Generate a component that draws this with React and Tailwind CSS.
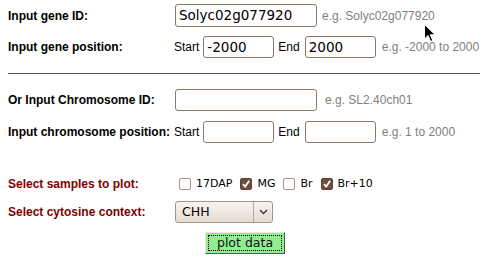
import React from "react";

const Box = ({ w, h = "h-[22px]", value }) => (
  <div
    className={`${w} ${h} border border-[#86796c] rounded-[3px] bg-white flex items-center px-[3px] font-['DejaVu_Sans',sans-serif] text-[13.5px] text-black`}
  >
    {value}
  </div>
);

const Hint = ({ children, className = "" }) => (
  <span className={`text-[12px] text-[#808080] ${className}`}>{children}</span>
);

const Check = ({ checked, label }) => (
  <label className="flex items-center">
    <span
      className={`ml-[4px] w-[12px] h-[12px] rounded-[2px] border flex items-center justify-center ${
        checked ? "bg-[#6e4d3b] border-[#5e4031]" : "bg-white border-[#a3968a]"
      }`}
    >
      {checked && (
        <svg width="10" height="10" viewBox="0 0 10 10">
          <path d="M2 5.2 L4.2 7.6 L8.2 1.8" stroke="#fff" strokeWidth="1.8" fill="none" />
        </svg>
      )}
    </span>
    <span className="ml-[5px] mr-[4px] font-['DejaVu_Sans',sans-serif] text-[11px] text-black">
      {label}
    </span>
  </label>
);

export default function App() {
  return (
    <div className="relative w-[486px] h-[268px] bg-white font-['Liberation_Sans',Arial,sans-serif] text-[12px] text-black overflow-hidden">
      <div className="pt-[4px] pl-[8px] pr-[6px]">
        {/* gene id */}
        <div className="flex items-center h-[23px]">
          <div className="w-[167px] font-bold">Input gene ID:</div>
          <Box w="w-[142px]" h="h-[23px]" value="Solyc02g077920" />
          <Hint className="ml-[5px]">e.g. Solyc02g077920</Hint>
        </div>

        {/* gene position */}
        <div className="flex items-center h-[22px] mt-[9px]">
          <div className="w-[166px] font-bold">Input gene position:</div>
          <span className="mr-[4px]">Start</span>
          <Box w="w-[71px]" value="-2000" />
          <span className="ml-[4px] mr-[5px]">End</span>
          <Box w="w-[71px]" value="2000" />
          <Hint className="ml-[6px]">e.g. -2000 to 2000</Hint>
        </div>

        <div className="mt-[15px] border-t border-[#555] w-[472px]" />

        {/* chromosome id */}
        <div className="flex items-center h-[22px] mt-[15px]">
          <div className="w-[167px] font-bold">Or Input Chromosome ID:</div>
          <Box w="w-[142px]" />
          <Hint className="ml-[8px]">e.g. SL2.40ch01</Hint>
        </div>

        {/* chromosome position */}
        <div className="flex items-center h-[22px] mt-[10px]">
          <div className="w-[166px] font-bold">Input chromosome position:</div>
          <span className="mr-[4px]">Start</span>
          <Box w="w-[71px]" />
          <span className="ml-[4px] mr-[5px]">End</span>
          <Box w="w-[71px]" />
          <Hint className="ml-[6px]">e.g. 1 to 2000</Hint>
        </div>

        {/* samples */}
        <div className="flex items-center h-[22px] mt-[30px]">
          <div className="w-[167px] font-bold text-[#800000]">Select samples to plot:</div>
          <Check label="17DAP" />
          <Check checked label="MG" />
          <Check label="Br" />
          <Check checked label="Br+10" />
        </div>

        {/* context */}
        <div className="flex items-center h-[22px] mt-[6px]">
          <div className="w-[167px] font-bold text-[#800000]">Select cytosine context:</div>
          <div className="w-[98px] h-[22px] border border-[#a4968a] rounded-[3px] bg-gradient-to-b from-[#f7f4f0] to-[#e4dbd1] flex items-center font-['DejaVu_Sans',sans-serif] text-[12.5px]">
            <span className="flex-1 pl-[6px]">CHH</span>
            <span className="h-full border-l border-[#b8ab9e] w-[19px] flex items-center justify-center">
              <svg width="9" height="6" viewBox="0 0 9 6">
                <path d="M1 1 L4.5 4.5 L8 1" stroke="#333" strokeWidth="1.3" fill="none" />
              </svg>
            </span>
          </div>
        </div>

        {/* button */}
        <div className="flex mt-[9px] pl-[197px]">
          <button className="w-[80px] h-[22px] bg-[#90ee90] border border-t-[#e8e8e8] border-l-[#e8e8e8] border-r-[#555] border-b-[#555] p-[2px]">
            <span className="block w-full h-full border border-dotted border-black flex items-center justify-center font-['DejaVu_Sans',sans-serif] text-[12.5px] text-[#111] leading-none">
              plot data
            </span>
          </button>
        </div>
      </div>

      {/* mouse pointer */}
      <svg className="absolute left-[424px] top-[24px]" width="13" height="19" viewBox="0 0 13 19">
        <path d="M0.5 0.5 L0.5 15 L4 11.5 L6.6 17.5 L8.8 16.5 L6.3 10.8 L11.2 10.8 Z" fill="#000" stroke="#fff" strokeWidth="1" />
      </svg>
    </div>
  );
}
